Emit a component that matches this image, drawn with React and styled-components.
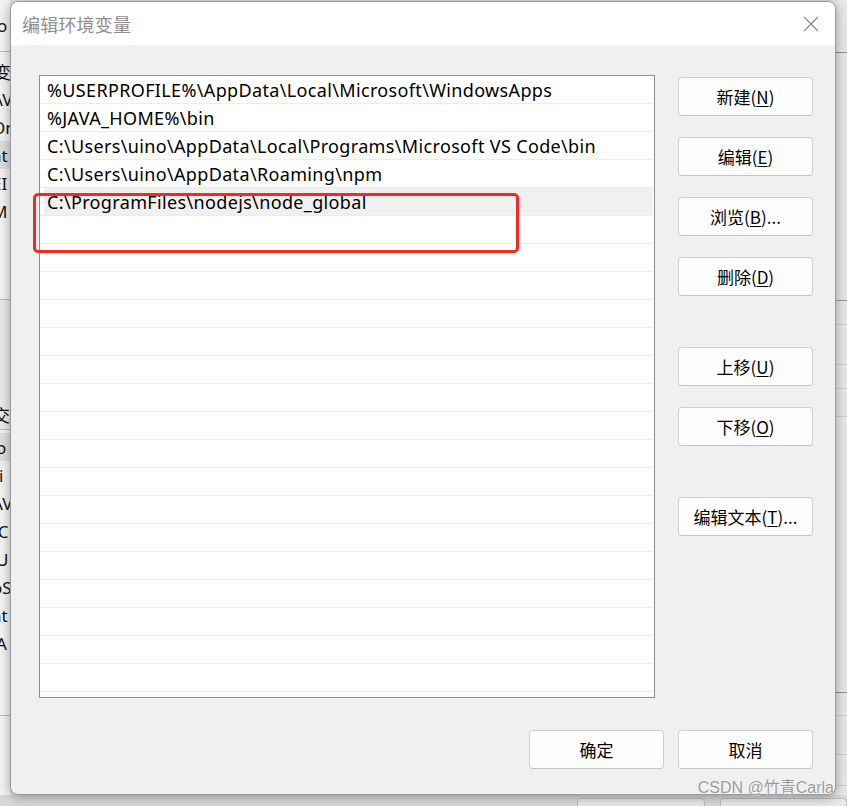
import React from 'react';
import styled, { createGlobalStyle } from 'styled-components';

const GlobalStyle = createGlobalStyle`
  html, body {
    margin: 0;
    padding: 0;
    background: #e6e6e6;
  }
  body {
    font-family: "Noto Sans", "Noto Sans CJK SC", sans-serif;
  }
`;

const Desktop = styled.div`
  position: relative;
  width: 847px;
  height: 806px;
  overflow: hidden;
  background: #e4e4e4;
`;

// the window behind the dialog
const BackWindow = styled.div`
  display: grid;
  grid-template-columns: 10px 1fr 11px;
  height: 100%;
`;

const BackLeft = styled.div`
  display: flex;
  flex-direction: column;
  background: #f3f3f3;
  overflow: hidden;
`;

const BackHeader = styled.div`
  height: ${(p) => p.h}px;
  border-bottom: 1px solid #b8b8b8;
  background: ${(p) => p.bg || '#f3f3f3'};
  display: flex;
  align-items: center;
  box-sizing: border-box;
  font-size: 17px;
  color: #111;
  white-space: nowrap;
`;

const BackRow = styled.div`
  height: 28px;
  display: flex;
  align-items: center;
  white-space: nowrap;
  font-size: 17px;
  color: #111;
  background: ${(p) => (p.sel ? '#dedede' : 'transparent')};
  margin-left: ${(p) => p.shift || 0}px;
`;

const BackGap = styled.div`
  height: ${(p) => p.h}px;
  background: ${(p) => p.bg || 'transparent'};
  border-bottom: ${(p) => (p.line ? '1px solid #b8b8b8' : 'none')};
`;

const BackRight = styled.div`
  display: flex;
  flex-direction: column;
  background: #e8e8e8;
`;

const RightLine = styled.div`
  height: ${(p) => p.h}px;
  border-bottom: 1px solid ${(p) => p.c || '#cdcdcd'};
  flex-shrink: 0;
`;

const BackBottom = styled.div`
  position: absolute;
  left: 0;
  right: 0;
  top: 795px;
  height: 11px;
  display: flex;
  gap: 15px;
  padding-left: 577px;
  background: #d9d9d9;
`;

const GhostButton = styled.div`
  width: 134px;
  height: 14px;
  margin-top: 3px;
  border: 1px solid #bdbdbd;
  border-radius: 4px;
  background: #e9e9e9;
`;

const Dialog = styled.div`
  position: absolute;
  left: 10px;
  top: 1px;
  width: 826px;
  height: 794px;
  box-sizing: border-box;
  border: 1px solid #9a9a9a;
  border-radius: 8px;
  background: #f0f0f0;
  box-shadow: 0 2px 12px rgba(0, 0, 0, 0.35);
  display: flex;
  flex-direction: column;
  overflow: hidden;
`;

const TitleBar = styled.div`
  height: 43px;
  flex-shrink: 0;
  background: #ffffff;
  display: flex;
  align-items: center;
  justify-content: space-between;
  padding: 0 14px 0 11px;
`;

const Title = styled.div`
  font-family: "Noto Sans CJK SC", sans-serif;
  font-size: 18px;
  color: #8e8e8e;
  letter-spacing: 0.2px;
`;

const CloseButton = styled.div`
  width: 20px;
  height: 20px;
  display: flex;
  align-items: center;
  justify-content: center;
`;

const Body = styled.div`
  flex: 1;
  display: grid;
  grid-template-columns: 616px 135px;
  align-items: start;
  column-gap: 23px;
  padding: 30px 22px 0 28px;
`;

const ListBox = styled.div`
  height: 623px;
  box-sizing: border-box;
  border: 1px solid #8d8d8d;
  background: #ffffff;
  overflow: hidden;
`;

const Row = styled.div`
  height: 28px;
  box-sizing: border-box;
  border-bottom: 1px solid #ececec;
  margin-right: 1px;
  display: flex;
`;

const RowInner = styled.div`
  flex: 1;
  margin-left: ${(p) => (p.sel ? 4 : 0)}px;
  padding-left: ${(p) => (p.sel ? 3 : 7)}px;
  background: ${(p) => (p.sel ? '#f0f0f0' : 'transparent')};
  font-size: 18px;
  letter-spacing: 0.35px;
  color: #000;
  line-height: 28px;
  white-space: nowrap;
`;

const ButtonColumn = styled.div`
  display: flex;
  flex-direction: column;
  padding-top: 2px;
`;

const Button = styled.button`
  width: 135px;
  height: 39px;
  box-sizing: border-box;
  margin-bottom: ${(p) => p.mb ?? 21}px;
  border: 1px solid #d0d0d0;
  border-bottom-color: #c4c4c4;
  border-radius: 4px;
  background: #fdfdfd;
  font-family: "Noto Sans CJK SC", sans-serif;
  font-size: 17px;
  color: #000;
  padding: 0;
  display: flex;
  align-items: center;
  justify-content: center;

  u {
    text-underline-offset: 2px;
  }
`;

const Footer = styled.div`
  display: flex;
  justify-content: flex-end;
  gap: 14px;
  padding: 0 22px 25px 0;
`;

const Annotation = styled.div`
  position: absolute;
  left: 33px;
  top: 193px;
  width: 486px;
  height: 60px;
  box-sizing: border-box;
  border: 3px solid #f22a22;
  border-radius: 5px;
`;

const Watermark = styled.div`
  position: absolute;
  right: 13px;
  bottom: 8px;
  font-family: "Liberation Sans", "Noto Sans CJK SC", sans-serif;
  font-size: 16px;
  color: #9a9a9a;
  text-shadow: 0 0 1px #fff, 0 0 1px #fff;
`;

const paths = [
  '%USERPROFILE%\\AppData\\Local\\Microsoft\\WindowsApps',
  '%JAVA_HOME%\\bin',
  'C:\\Users\\uino\\AppData\\Local\\Programs\\Microsoft VS Code\\bin',
  'C:\\Users\\uino\\AppData\\Roaming\\npm',
  'C:\\ProgramFiles\\nodejs\\node_global',
];

const backTop = ['变量', 'AV', 'On', 'at', 'EI', 'M'];
const backBottom = ['o', 'ri', 'AV', 'IC', 'U', 'oS', 'at', 'A'];

function App() {
  const rows = [];
  for (let i = 0; i < 23; i++) {
    rows.push(
      <Row key={i}>
        <RowInner sel={i === 4}>{paths[i] || ''}</RowInner>
      </Row>
    );
  }

  return (
    <Desktop>
      <GlobalStyle />
      <BackWindow>
        <BackLeft>
          <BackHeader h={52}>
            <span style={{ marginLeft: -3 }}>o</span>
          </BackHeader>
          <BackGap h={5} />
          {backTop.map((t, i) => (
            <BackRow key={t + i} sel={i === 3} shift={i === 0 ? -6 : -8}>
              {t}
            </BackRow>
          ))}
          <BackGap h={74} line />
          <BackGap h={100} bg="#eaeaea" />
          <BackHeader h={30} bg="#ececec">
            <span style={{ marginLeft: -7 }}>交</span>
          </BackHeader>
          <BackGap h={3} />
          {backBottom.map((t, i) => (
            <BackRow key={t + i} sel={i === 0} shift={-8 + (t.length === 1 ? 4 : 0)}>
              {t}
            </BackRow>
          ))}
          <BackGap h={58} line />
        </BackLeft>
        <div />
        <BackRight>
          <RightLine h={52} c="#8a8a9a" />
          <RightLine h={247} c="#9a9aa6" />
          <RightLine h={23} />
          <RightLine h={39} />
          <RightLine h={23} />
          <RightLine h={27} />
          <RightLine h={275} c="#8a8a9a" />
          <RightLine h={22} />
          <RightLine h={38} />
          <RightLine h={30} />
        </BackRight>
      </BackWindow>
      <BackBottom>
        <GhostButton />
        <GhostButton />
      </BackBottom>

      <Dialog>
        <TitleBar>
          <Title>编辑环境变量</Title>
          <CloseButton>
            <svg width="18" height="18" viewBox="0 0 18 18">
              <path d="M2 2 L16 16 M16 2 L2 16" stroke="#8a8a8a" strokeWidth="1.3" fill="none" />
            </svg>
          </CloseButton>
        </TitleBar>
        <Body>
          <ListBox>{rows}</ListBox>
          <ButtonColumn>
            <Button>新建(<u>N</u>)</Button>
            <Button>编辑(<u>E</u>)</Button>
            <Button>浏览(<u>B</u>)...</Button>
            <Button mb={51}>删除(<u>D</u>)</Button>
            <Button>上移(<u>U</u>)</Button>
            <Button mb={51}>下移(<u>O</u>)</Button>
            <Button>编辑文本(<u>T</u>)...</Button>
          </ButtonColumn>
        </Body>
        <Footer>
          <Button mb={0}>确定</Button>
          <Button mb={0}>取消</Button>
        </Footer>
      </Dialog>

      <Annotation />
      <Watermark>CSDN @竹青Carla</Watermark>
    </Desktop>
  );
}

export default App;
